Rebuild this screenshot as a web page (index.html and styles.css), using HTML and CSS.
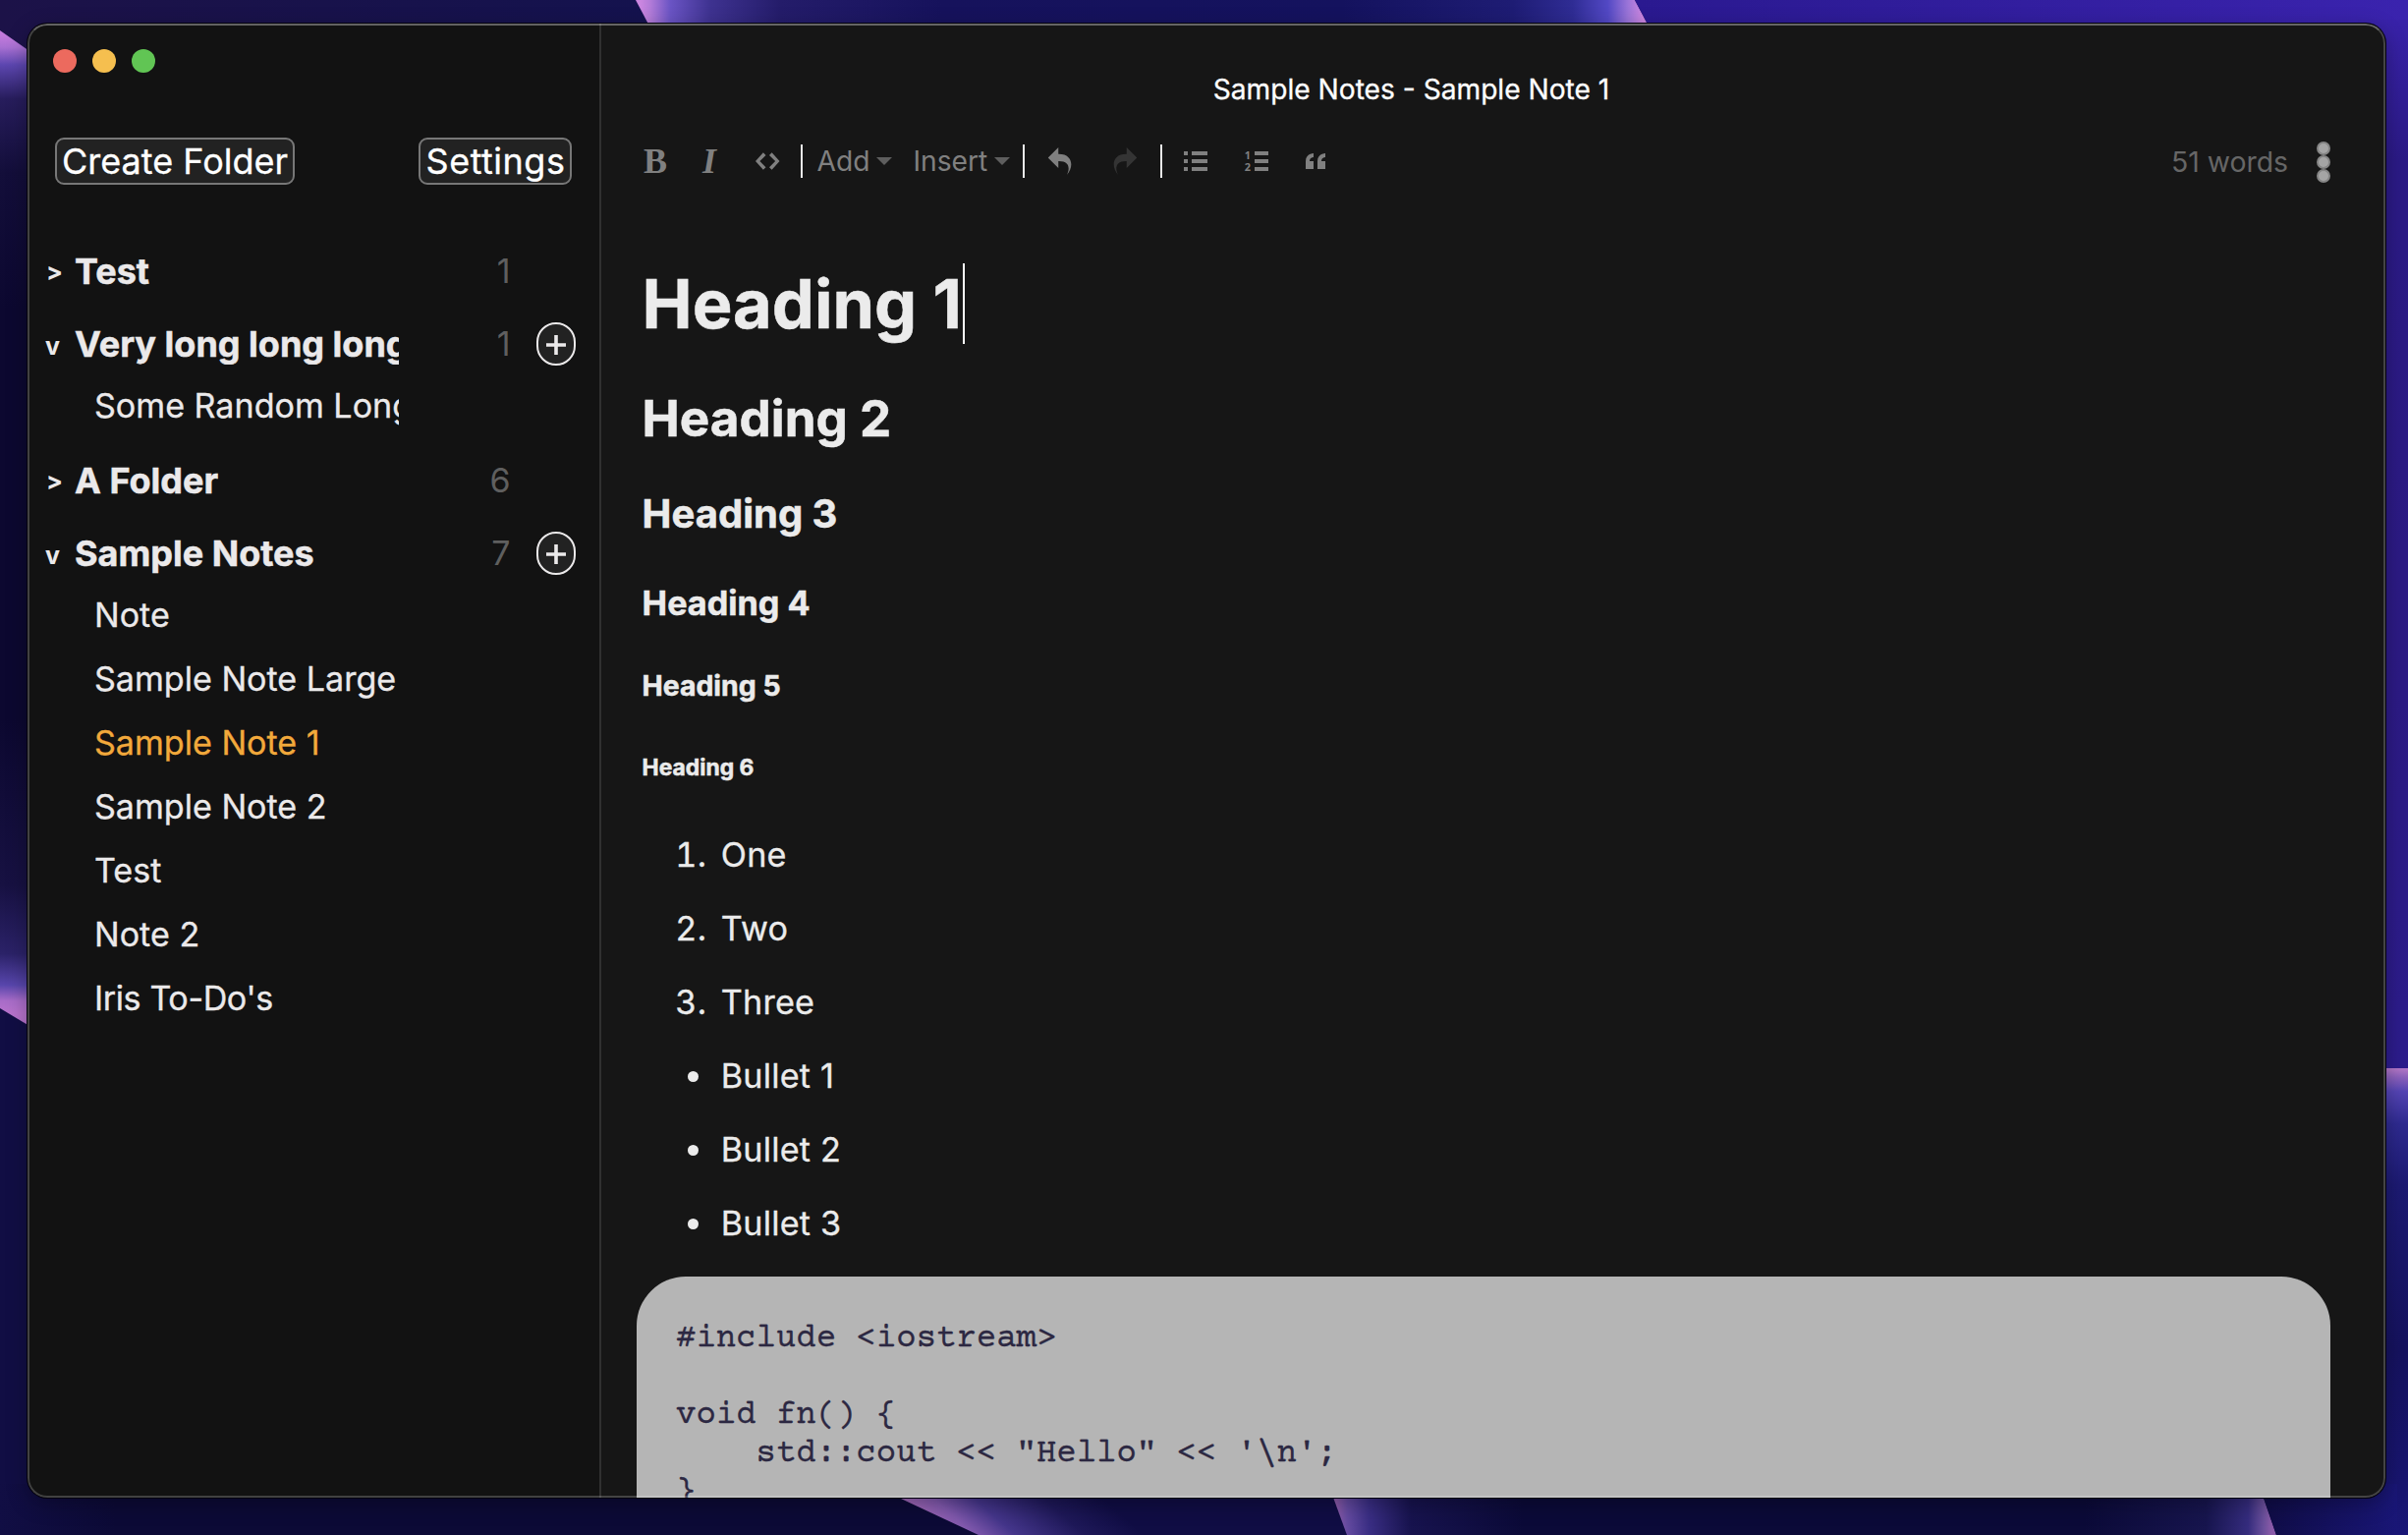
FILE: index.html
```html
<!DOCTYPE html>
<html lang="en">
<head>
<meta charset="utf-8">
<title>Sample Notes - Sample Note 1</title>
<link rel="stylesheet" href="styles.css">
</head>
<body class="desktop">
<svg class="wallpaper" viewBox="0 0 2451 1562" aria-hidden="true">
  <defs>
    <linearGradient id="top-base" gradientUnits="userSpaceOnUse" x1="0" y1="0" x2="660" y2="0"><stop offset="0" stop-color="#1c1248"/><stop offset="1" stop-color="#14124e"/></linearGradient>
    <linearGradient id="top-glow" gradientUnits="userSpaceOnUse" x1="652" y1="16" x2="1672" y2="0"><stop offset="0" stop-color="#cb86e0"/><stop offset=".01" stop-color="#b27bd8"/><stop offset=".03" stop-color="#6a54c4"/><stop offset=".07" stop-color="#3e3290"/><stop offset=".14" stop-color="#241c6a"/><stop offset=".3" stop-color="#16125c"/><stop offset=".7" stop-color="#14125e"/><stop offset=".87" stop-color="#1e1c74"/><stop offset=".93" stop-color="#2f2c94"/><stop offset=".965" stop-color="#5248c4"/><stop offset=".985" stop-color="#9a74d8"/><stop offset="1" stop-color="#cb86e0"/></linearGradient>
    <linearGradient id="top-right" gradientUnits="userSpaceOnUse" x1="1670" y1="0" x2="2451" y2="0"><stop offset="0" stop-color="#2a1990"/><stop offset="1" stop-color="#3a23ae"/></linearGradient>
    <linearGradient id="left-glow" gradientUnits="userSpaceOnUse" x1="0" y1="36" x2="-14" y2="1030"><stop offset="0" stop-color="#c27adc"/><stop offset=".012" stop-color="#a870d2"/><stop offset=".03" stop-color="#5c46b0"/><stop offset=".065" stop-color="#271d5c"/><stop offset=".14" stop-color="#130e3a"/><stop offset=".28" stop-color="#0c0830"/><stop offset=".7" stop-color="#0c0830"/><stop offset=".87" stop-color="#171142"/><stop offset=".94" stop-color="#2b2268"/><stop offset=".972" stop-color="#5846ac"/><stop offset=".988" stop-color="#a86cc8"/><stop offset="1" stop-color="#b672cc"/></linearGradient>
    <linearGradient id="bottom-a" gradientUnits="userSpaceOnUse" x1="950" y1="1550" x2="1040" y2="1450"><stop offset="0" stop-color="#9a64b4"/><stop offset=".14" stop-color="#8058ac"/><stop offset=".35" stop-color="#44358a"/><stop offset=".7" stop-color="#1e1858"/><stop offset="1" stop-color="#100d44"/></linearGradient>
    <linearGradient id="bottom-b" gradientUnits="userSpaceOnUse" x1="1360" y1="0" x2="2312" y2="0"><stop offset="0" stop-color="#8a5aa8"/><stop offset=".012" stop-color="#644aa0"/><stop offset=".035" stop-color="#3a2e84"/><stop offset=".08" stop-color="#17134e"/><stop offset=".2" stop-color="#0b0a38"/><stop offset=".8" stop-color="#0b0a38"/><stop offset=".93" stop-color="#17154e"/><stop offset=".975" stop-color="#352c7e"/><stop offset=".992" stop-color="#6c509c"/><stop offset="1" stop-color="#8a5aa8"/></linearGradient>
    <linearGradient id="bottom-left" gradientUnits="userSpaceOnUse" x1="0" y1="0" x2="980" y2="0"><stop offset="0" stop-color="#110e44"/><stop offset=".12" stop-color="#0c0a36"/><stop offset="1" stop-color="#0c0a36"/></linearGradient>
    <linearGradient id="bottom-right" gradientUnits="userSpaceOnUse" x1="2300" y1="0" x2="2440" y2="0"><stop offset="0" stop-color="#0f0c44"/><stop offset="1" stop-color="#191676"/></linearGradient>
    <linearGradient id="right-top" gradientUnits="userSpaceOnUse" x1="0" y1="0" x2="0" y2="1087"><stop offset="0" stop-color="#3a23ae"/><stop offset=".15" stop-color="#2b1a86"/><stop offset=".6" stop-color="#2c1a84"/><stop offset="1" stop-color="#2c1c8c"/></linearGradient>
    <linearGradient id="right-bottom" gradientUnits="userSpaceOnUse" x1="0" y1="1087" x2="0" y2="1562"><stop offset="0" stop-color="#b478c8"/><stop offset=".02" stop-color="#8a60bc"/><stop offset=".05" stop-color="#5444b4"/><stop offset=".12" stop-color="#2e2a90"/><stop offset=".25" stop-color="#1c1a72"/><stop offset=".6" stop-color="#15125e"/><stop offset="1" stop-color="#191676"/></linearGradient>
  </defs>
  <rect width="2451" height="1562" fill="#110e44"/>
  <rect width="700" height="60" fill="url(#top-base)"/>
  <path d="M0 31L60 73V1062L0 1026Z" fill="url(#left-glow)"/>
  <path d="M647 0H1664L1682 34H665Z" fill="url(#top-glow)"/>
  <path d="M1664 0H2451V34H1682Z" fill="url(#top-right)"/>
  <rect x="2400" y="20" width="51" height="1067" fill="url(#right-top)"/>
  <rect x="2400" y="1087" width="51" height="475" fill="url(#right-bottom)"/>
  <rect y="1510" width="1000" height="52" fill="url(#bottom-left)"/>
  <path d="M885 1510L996 1562H1371L1352 1510Z" fill="url(#bottom-a)"/>
  <path d="M1352 1510H2299L2317 1562H1371Z" fill="url(#bottom-b)"/>
  <path d="M2299 1510H2440V1562H2317Z" fill="url(#bottom-right)"/>
</svg>

<div class="window">
  <aside class="sidebar">
    <div class="traffic">
      <span class="light light-close"></span>
      <span class="light light-min"></span>
      <span class="light light-max"></span>
    </div>
    <div class="actions">
      <button class="btn">Create Folder</button>
      <button class="btn btn-settings">Settings</button>
    </div>
    <nav class="folders">
      <section class="folder">
        <div class="folder-row"><span class="arrow arrow-closed">&gt;</span><span class="folder-name">Test</span><span class="count">1</span></div>
      </section>
      <section class="folder">
        <div class="folder-row"><span class="arrow">v</span><span class="folder-name">Very long long long</span><span class="count">1</span><button class="add" aria-label="Add note"><svg class="plus" viewBox="0 0 20 20"><path d="M10 0V20M0 10H20"/></svg></button></div>
        <div class="note">Some Random Long</div>
      </section>
      <section class="folder">
        <div class="folder-row"><span class="arrow arrow-closed">&gt;</span><span class="folder-name">A Folder</span><span class="count">6</span></div>
      </section>
      <section class="folder">
        <div class="folder-row"><span class="arrow">v</span><span class="folder-name">Sample Notes</span><span class="count">7</span><button class="add" aria-label="Add note"><svg class="plus" viewBox="0 0 20 20"><path d="M10 0V20M0 10H20"/></svg></button></div>
        <div class="note">Note</div>
        <div class="note">Sample Note Large</div>
        <div class="note note-active">Sample Note 1</div>
        <div class="note">Sample Note 2</div>
        <div class="note">Test</div>
        <div class="note">Note 2</div>
        <div class="note note-tight">Iris To-Do's</div>
      </section>
    </nav>
  </aside>

  <main class="main">
    <div class="title">Sample Notes - Sample Note 1</div>
    <div class="toolbar">
      <span class="tool bold">B</span>
      <span class="tool italic">I</span>
      <svg class="tool code-icon" viewBox="0 0 896 1024"><path d="M608 192l-96 96 224 224-224 224 96 96 288-320-288-320zM288 192l-288 320 288 320 96-96-224-224 224-224-96-96z"/></svg>
      <span class="sep sep-first"></span>
      <span class="menu menu-add">Add<i class="caret"></i></span>
      <span class="menu menu-insert">Insert<i class="caret"></i></span>
      <span class="sep sep-second"></span>
      <svg class="tool undo" viewBox="0 0 1024 1024"><path d="M761 1024c113-206 132-520-313-509v253l-384-384 384-384v248c534-13 594 472 313 775z"/></svg>
      <svg class="tool redo" viewBox="0 0 1024 1024"><path d="M576 248v-248l384 384-384 384v-253c-446-10-427 303-313 509-280-303-221-789 313-775z"/></svg>
      <span class="sep sep-third"></span>
      <svg class="tool bullets" viewBox="0 0 768 896"><path d="M0 512h128v-128h-128v128zM0 256h128v-128h-128v128zM0 768h128v-128h-128v128zM256 512h512v-128h-512v128zM256 256h512v-128h-512v128zM256 768h512v-128h-512v128z"/></svg>
      <svg class="tool numbers" viewBox="0 0 768 896"><path d="M320 512h448v-128h-448v128zM320 768h448v-128h-448v128zM320 128v128h448v-128h-448z"/><text class="digit" x="-10" y="384">1</text><text class="digit" x="-10" y="768">2</text></svg>
      <svg class="tool quote" viewBox="0 0 640 896"><path d="M0 448v256h256v-256h-128c0 0 0-128 128-128v-128c0 0-256 0-256 256zM640 320v-128c0 0-256 0-256 256v256h256v-256h-128c0 0 0-128 128-128z"/></svg>
      <span class="words">51 words</span>
      <span class="dots"><i class="dot"></i><i class="dot"></i><i class="dot"></i></span>
    </div>
    <article class="editor">
      <h1 class="h1">Heading 1<span class="cursor"></span></h1>
      <h2 class="h2">Heading 2</h2>
      <h3 class="h3">Heading 3</h3>
      <h4 class="h4">Heading 4</h4>
      <h5 class="h5">Heading 5</h5>
      <h6 class="h6">Heading 6</h6>
      <ol class="list list-first">
        <li class="item">One</li>
        <li class="item">Two</li>
        <li class="item">Three</li>
      </ol>
      <ul class="list">
        <li class="item">Bullet 1</li>
        <li class="item">Bullet 2</li>
        <li class="item">Bullet 3</li>
      </ul>
      <pre class="code">#include &lt;iostream&gt;

void fn() {
    std::cout &lt;&lt; "Hello" &lt;&lt; '\n';
}</pre>
    </article>
  </main>
</div>
</body>
</html>
```
FILE: styles.css
```css
* { box-sizing: border-box; }

.desktop {
  margin: 0;
  width: 2451px;
  height: 1562px;
  overflow: hidden;
  background: #110e44;
  font-family: Inter, "Liberation Sans", sans-serif;
}

.wallpaper { position: absolute; left: 0; top: 0; width: 2451px; height: 1562px; }

.window {
  position: absolute;
  left: 28px;
  top: 24px;
  width: 2400px;
  height: 1500px;
  display: flex;
  overflow: hidden;
  border-radius: 20px;
  background: #161616;
  box-shadow: 0 0 0 1px #05030f, 0 6px 22px rgba(0, 0, 0, .3);
}

/* translucent rim drawn over the window content */
.window::after {
  content: "";
  position: absolute;
  inset: 0;
  border: 2px solid rgba(255, 255, 255, .2);
  border-top-color: rgba(255, 255, 255, .34);
  border-radius: 20px;
  pointer-events: none;
}

.sidebar {
  width: 584px;
  flex: none;
  background: #121212;
  border-right: 2px solid #303030;
}

.traffic { display: flex; gap: 16px; padding: 26px 0 0 26px; }
.light { width: 24px; height: 24px; border-radius: 50%; }
.light-close { background: #ec6a5e; }
.light-min { background: #f5bf4f; }
.light-max { background: #61c554; }

.actions { display: flex; justify-content: space-between; padding: 66px 28px 0; }
.btn {
  height: 48px;
  width: 244px;
  padding: 0;
  border: 2px solid #777;
  border-radius: 9px;
  background: #222;
  color: #fff;
  font: 400 36px/44px Inter, sans-serif;
  white-space: nowrap;
  -webkit-text-stroke: .3px;
}
.btn-settings { width: 156px; padding-left: 1px; letter-spacing: .5px; }

.folders { display: flex; flex-direction: column; gap: 12px; padding-top: 56px; color: #ebe9ea; }
.folder-row { display: flex; align-items: center; height: 62px; padding: 1.5px 0 0 17px; }
.arrow { width: 31px; font-size: 25px; font-weight: 700; line-height: 30px; padding: 4px 0 0 1px; }
.arrow-closed { padding: 0 0 0 2px; }
.folder-name { width: 330px; overflow: hidden; white-space: nowrap; font-size: 36px; font-weight: 700; line-height: 60px; -webkit-text-stroke: .5px; }
.count { width: 113.5px; text-align: right; font-size: 34px; line-height: 60px; color: #5f5f5f; }
.add {
  display: flex;
  align-items: center;
  justify-content: center;
  width: 40px;
  height: 44px;
  margin-left: 26.5px;
  padding: 0;
  border: 2px solid #ebe9ea;
  border-radius: 20px;
  background: #222;
}
.plus { width: 20px; height: 20px; stroke: #ebe9ea; stroke-width: 3.6; margin-top: 2px; }
.note { width: 310px; margin-left: 68px; overflow: hidden; white-space: nowrap; font-size: 34.1px; line-height: 65px; -webkit-text-stroke: .3px; }
.note-active { color: #f2a93b; }
.note-tight { letter-spacing: -.39px; }

.main { flex: 1; min-width: 0; }

.title { padding: 49px 167px 0 0; height: 86px; text-align: center; color: #fff; font-size: 28.15px; line-height: 36px; -webkit-text-stroke: .3px; }

.toolbar { display: flex; align-items: center; height: 107px; padding: 0 56px 0 43px; color: #808080; }
.tool { height: 28px; flex: none; fill: #808080; }
.bold, .italic { font: 700 36px/28px "Liberation Serif", serif; width: 22px; }
.italic { font-style: italic; width: 16px; margin-left: 38px; }
.code-icon { width: 24.5px; margin-left: 38px; }
.sep { width: 2px; height: 34px; background: #e8e8e8; flex: none; }
.sep-first { margin-left: 21.5px; }
.sep-second { margin-left: 13px; }
.sep-third { margin-left: 22px; }
.menu { display: flex; align-items: center; font-size: 28.2px; line-height: 34px; }
.menu-add { width: 76px; margin-left: 14.5px; justify-content: space-between; }
.menu-insert { width: 98px; margin-left: 22px; justify-content: space-between; }
.caret { border: 8px solid transparent; border-top-color: #5e5e5e; border-bottom: 0; }
.undo { width: 28px; margin-left: 22px; }
.redo { width: 28px; margin-left: 38px; fill: #343434; }
.bullets { width: 24px; margin-left: 22px; }
.numbers { width: 24px; margin-left: 38px; overflow: visible; }
.digit { font: 700 350px "Open Sans", sans-serif; }
.quote { width: 20px; margin-left: 38px; }
.words { margin-left: auto; font-size: 28.4px; line-height: 36px; color: #666; padding-top: 2px; }
.dots { display: flex; flex-direction: column; margin-left: 29px; padding-top: 2px; }
.dot { width: 14px; height: 14px; border-radius: 50%; background: #a5a5a5; border: 2px solid #858585; }

.editor { padding: 51px 56px 0 36px; color: #ebebeb; font-size: 34.2px; line-height: 1.2; }
.h1, .h2, .h3, .h4, .h5, .h6 { padding-left: 5.6px; font-weight: 700; -webkit-text-stroke: .5px; }
.h1 { display: flex; margin: 0; font-size: 68.4px; }
.cursor { width: 2px; margin-left: 1.4px; background: #fff; }
.h2 { margin: 44.5px 0 0; font-size: 51.2px; }
.h3 { margin: 42.5px 0 0; font-size: 40px; }
.h4 { margin: 46.5px 0 0; font-size: 34.2px; }
.h5 { margin: 46.5px 0 0; font-size: 28.4px; }
.h6 { margin: 53.5px 0 0; font-size: 22.9px; }
.list { display: flex; flex-direction: column; gap: 34px; margin: 34px 0 0; padding-left: 80.5px; letter-spacing: .2px; -webkit-text-stroke: .3px; }
.list-first { margin-top: 53.5px; }
.item { padding-left: 5.3px; }
.code {
  margin: 34px 0 0;
  height: 320px;
  padding: 43.5px 40px 0;
  border-radius: 50px;
  background: #b5b5b5;
  color: #2c2842;
  font: 34px/39.1px "Courier Prime", "Courier New", "Liberation Mono", monospace;
  -webkit-text-stroke: .3px;
}
```
